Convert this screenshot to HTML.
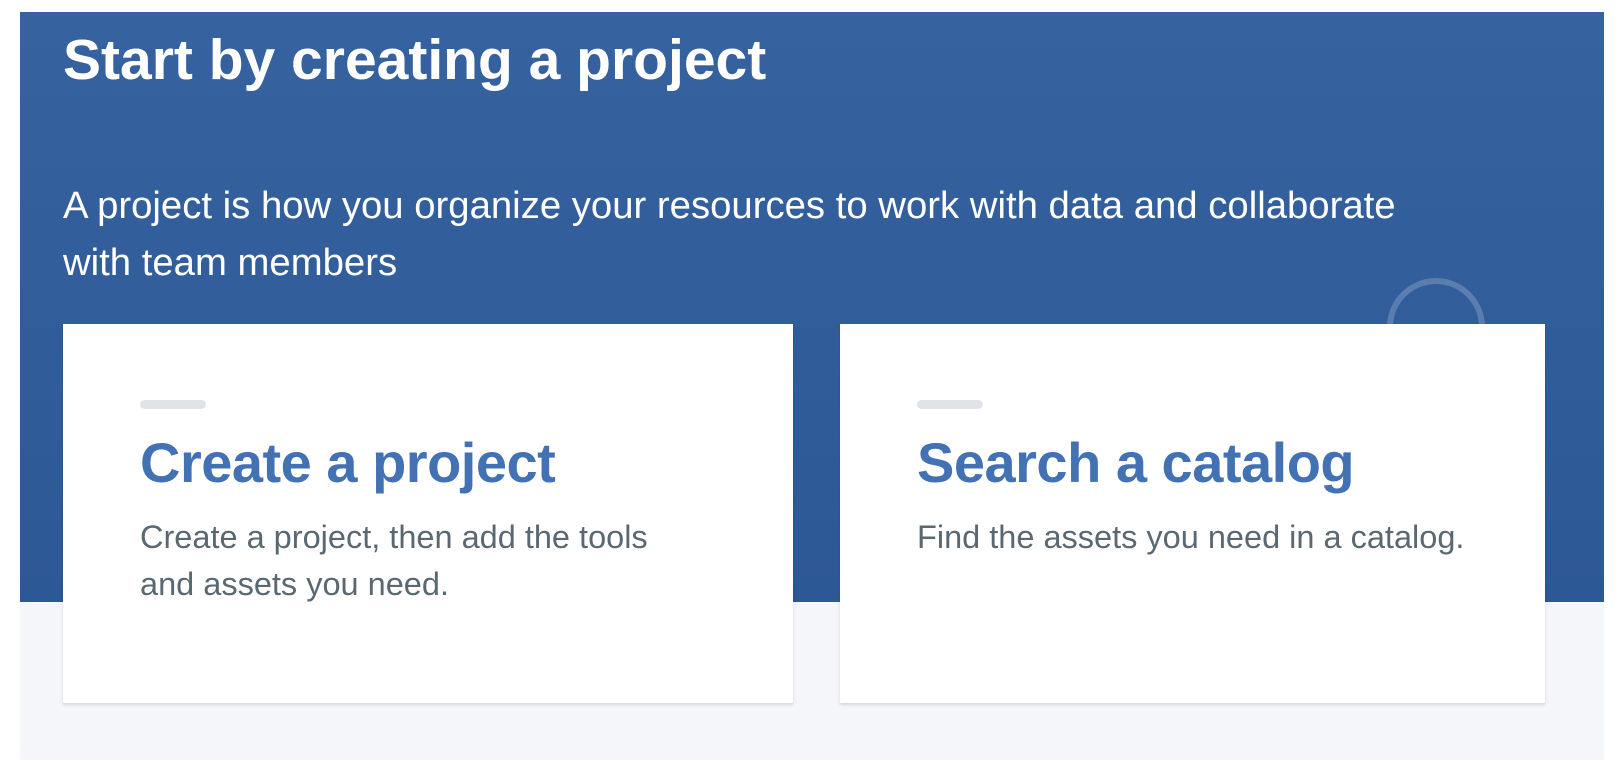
<!DOCTYPE html>
<html><head><style>
html,body{margin:0;padding:0;background:#fff;}
body{width:1624px;height:780px;position:relative;overflow:hidden;font-family:"Liberation Sans",sans-serif;}
.blue{position:absolute;left:20px;top:12px;width:1584px;height:590px;background:linear-gradient(#3662a0,#2d5896);}
.gray{position:absolute;left:20px;top:602px;width:1584px;height:158px;background:#f4f6fa;}
.t{position:absolute;color:#fff;white-space:nowrap;}
.circle{position:absolute;left:1387px;top:278px;width:86px;height:86px;border:6px solid rgba(255,255,255,.2);border-radius:50%;}
.card{position:absolute;top:324px;height:379px;background:#fff;box-shadow:0 2px 3px rgba(0,0,0,.12);}
.dash{position:absolute;top:76px;left:77px;width:66px;height:9px;border-radius:5px;background:#e0e4e9;}
.h{position:absolute;left:77px;top:106px;font-size:56px;font-weight:bold;color:#4271b4;white-space:nowrap;letter-spacing:-0.5px;}
.p{position:absolute;left:77px;top:190px;font-size:32.5px;line-height:46.5px;color:#5a6872;white-space:nowrap;}
</style></head><body>
<div class="blue"></div>
<div class="gray"></div>
<div class="circle"></div>
<div class="t" style="left:63px;top:27px;font-size:57px;font-weight:bold;">Start by creating a project</div>
<div class="t" style="left:63px;top:177px;font-size:38.3px;line-height:57px;">A project is how you organize your resources to work with data and collaborate<br>with team members</div>
<div class="card" style="left:63px;width:730px;">
<div class="dash"></div>
<div class="h">Create a project</div>
<div class="p">Create a project, then add the tools<br>and assets you need.</div>
</div>
<div class="card" style="left:840px;width:705px;">
<div class="dash"></div>
<div class="h">Search a catalog</div>
<div class="p">Find the assets you need in a catalog.</div>
</div>
</body></html>
